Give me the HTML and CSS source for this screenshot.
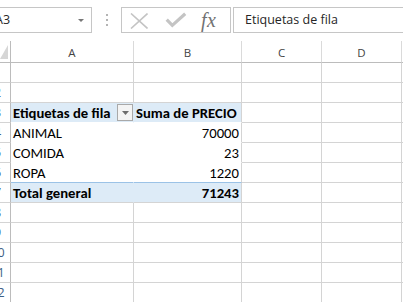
FILE: index.html
```html
<!DOCTYPE html>
<html lang="es">
<head>
<meta charset="utf-8">
<title>Tabla dinámica</title>
<link rel="stylesheet" href="styles.css">
</head>
<body>
<div class="app">
  <div class="fbar">
    <div class="namebox"><span class="nb-text">A3</span><span class="nb-arrow"></span></div>
    <div class="grip"><i></i><i></i><i></i></div>
    <div class="fbtns">
      <svg class="ic-x" width="18" height="16" viewBox="0 0 18 16"><path d="M1 0.5 L17.5 15.5 M17.5 0.5 L1 15.5" fill="none" stroke="#c4c4c4" stroke-width="1.6"/></svg>
      <svg class="ic-check" width="22" height="16" viewBox="0 0 22 16"><path d="M1.7 7.7 L7.3 13.4 L20.2 1.8" fill="none" stroke="#c4c4c4" stroke-width="3.2"/></svg>
      <span class="fx">fx</span>
    </div>
    <div class="finput">Etiquetas de fila</div>
  </div>
  <div class="sheet">
    <div class="corner"><svg width="8" height="14" viewBox="0 0 8 14"><path d="M8 0 L8 14 L0 14 Z" fill="#d6d6d6"/></svg></div>
    <div class="ch">A</div><div class="ch">B</div><div class="ch">C</div><div class="ch">D</div><div class="ch"></div>

    <div class="rh"><span>1</span></div><div class="c"></div><div class="c"></div><div class="c"></div><div class="c"></div><div class="c"></div>
    <div class="rh"><span>2</span></div><div class="c"></div><div class="c"></div><div class="c"></div><div class="c"></div><div class="c"></div>
    <div class="rh"><span>3</span></div><div class="c pa ph b">Etiquetas de fila<span class="dd"><svg width="7" height="4" viewBox="0 0 7 4"><path d="M0 0 H7 L3.5 4 Z" fill="#6d6d6d"/></svg></span></div><div class="c pb ph b">Suma de PRECIO</div><div class="c"></div><div class="c"></div><div class="c"></div>
    <div class="rh"><span>4</span></div><div class="c pa">ANIMAL</div><div class="c pb num">70000</div><div class="c"></div><div class="c"></div><div class="c"></div>
    <div class="rh"><span>5</span></div><div class="c pa">COMIDA</div><div class="c pb num">23</div><div class="c"></div><div class="c"></div><div class="c"></div>
    <div class="rh"><span>6</span></div><div class="c pa last">ROPA</div><div class="c pb num last">1220</div><div class="c"></div><div class="c"></div><div class="c"></div>
    <div class="rh"><span>7</span></div><div class="c pa pt b">Total general</div><div class="c pb pt num b">71243</div><div class="c"></div><div class="c"></div><div class="c"></div>
    <div class="rh"><span>8</span></div><div class="c"></div><div class="c"></div><div class="c"></div><div class="c"></div><div class="c"></div>
    <div class="rh"><span>9</span></div><div class="c"></div><div class="c"></div><div class="c"></div><div class="c"></div><div class="c"></div>
    <div class="rh"><span>10</span></div><div class="c"></div><div class="c"></div><div class="c"></div><div class="c"></div><div class="c"></div>
    <div class="rh"><span>11</span></div><div class="c"></div><div class="c"></div><div class="c"></div><div class="c"></div><div class="c"></div>
    <div class="rh"><span>12</span></div><div class="c"></div><div class="c"></div><div class="c"></div><div class="c"></div><div class="c"></div>
  </div>
</div>
</body>
</html>
```
FILE: styles.css
```css
* { box-sizing: border-box; }
html, body { margin: 0; padding: 0; background: #fff; }
body { width: 403px; height: 302px; overflow: hidden; }

.app { width: 403px; height: 302px; overflow: hidden; }

/* formula bar */
.fbar {
  height: 41px;
  padding-top: 7px;
  display: flex;
  align-items: flex-start;
  font-family: "Open Sans", "Noto Sans", sans-serif;
  font-size: 12.5px;
  color: #262626;
}
.namebox {
  margin-left: -30px;
  width: 122px;
  height: 26px;
  border: 1px solid #c6c6c6;
  display: flex;
  align-items: center;
  padding-left: 24px;
  padding-right: 7px;
}
.nb-text { line-height: 24px; }
.nb-arrow {
  margin-left: auto;
  width: 0; height: 0;
  border-left: 3px solid transparent;
  border-right: 3px solid transparent;
  border-top: 3px solid #777;
}
.grip {
  margin-left: 14px;
  padding-top: 7px;
  display: flex;
  flex-direction: column;
  gap: 3px;
}
.grip i { display: block; width: 2px; height: 2px; background: #b4b4b4; }
.fbtns {
  margin-left: 13px;
  width: 110px;
  height: 26px;
  border: 1px solid #c6c6c6;
  display: flex;
  align-items: center;
}
.ic-x { margin-left: 8px; margin-top: 1px; }
.ic-check { margin-left: 17px; }
.fx {
  margin-left: 14px;
  font-family: "Liberation Serif", "DejaVu Serif", serif;
  font-style: italic;
  font-size: 20px;
  line-height: 20px;
  color: #727272;
  letter-spacing: 0.5px;
}
.finput {
  margin-left: 2px;
  flex: 1 0 auto;
  margin-right: -20px;
  height: 26px;
  border: 1px solid #c6c6c6;
  padding-left: 11px;
  line-height: 24px;
}

/* sheet */
.sheet {
  display: grid;
  grid-template-columns: 11px 123px 108px 80px 80px 1fr;
  grid-template-rows: 22px repeat(12, 20px);
  font-family: Carlito, Calibri, "Lato", sans-serif;
  font-size: 14.7px;
  color: #000;
}
.corner {
  border-right: 1px solid #bcbcbc;
  border-bottom: 1px solid #bcbcbc;
  display: flex;
  align-items: flex-end;
  padding-bottom: 3px;
}
.ch {
  border-right: 1px solid #dadada;
  border-bottom: 1px solid #bcbcbc;
  font-family: "Open Sans", "Noto Sans", sans-serif;
  font-size: 11.5px;
  color: #444;
  display: flex;
  align-items: center;
  justify-content: center;
  padding-top: 2px;
}
.rh {
  border-right: 1px solid #bcbcbc;
  border-bottom: 1px solid #d4d4d4;
  display: flex;
  justify-content: flex-end;
  align-items: center;
  font-family: "Open Sans", "Noto Sans", sans-serif;
  font-size: 12.5px;
  color: #3d5f86;
}
.rh span { flex: 0 0 25px; text-align: center; }

.c {
  border-right: 1px solid #d4d4d4;
  border-bottom: 1px solid #d4d4d4;
  display: flex;
  align-items: flex-end;
  padding: 0 2px 1px 2px;
  line-height: 16px;
  white-space: nowrap;
}
.pa { border-right-color: transparent; border-bottom-color: transparent; }
.pb { border-bottom-color: transparent; }
.ph { background: #ddebf7; border-bottom-color: #fff; }
.last { border-bottom-color: #9bc2e6; }
.pt { background: #ddebf7; border-bottom-color: #d4d4d4; }
.b { font-weight: bold; }
.num { justify-content: flex-end; }

.dd {
  margin-left: auto;
  margin-right: -2px;
  margin-bottom: 0;
  width: 16px;
  height: 17px;
  border: 1px solid #a9a9a9;
  background: #f4f4f4;
  display: flex;
  align-items: center;
  justify-content: center;
}
```
